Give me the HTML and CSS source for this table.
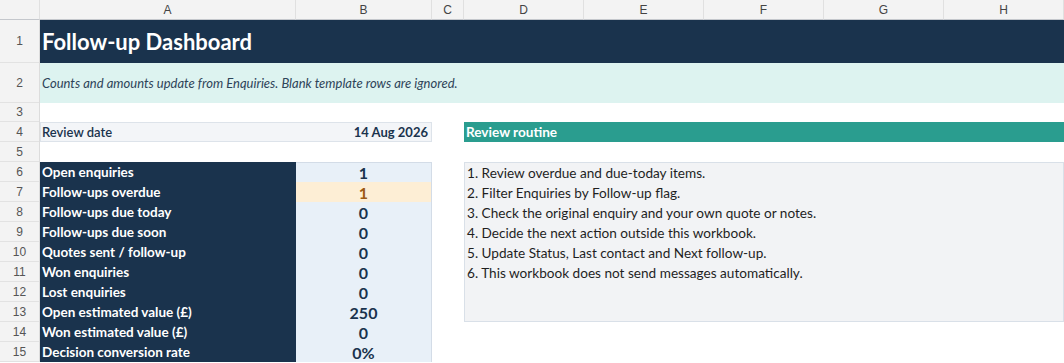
FILE: index.html
```html
<!DOCTYPE html>
<html>
<head>
<meta charset="utf-8">
<link rel="stylesheet" href="styles.css">
</head>
<body>
<div class="sheet">
  <div class="corner"></div>
  <div class="colhead">A</div>
  <div class="colhead">B</div>
  <div class="colhead">C</div>
  <div class="colhead">D</div>
  <div class="colhead">E</div>
  <div class="colhead">F</div>
  <div class="colhead">G</div>
  <div class="colhead">H</div>

  <div class="rownums">
    <div class="rn r-tall">1</div>
    <div class="rn r-mid">2</div>
    <div class="rn r-short">3</div>
    <div class="rn">4</div>
    <div class="rn">5</div>
    <div class="rn">6</div>
    <div class="rn">7</div>
    <div class="rn">8</div>
    <div class="rn">9</div>
    <div class="rn">10</div>
    <div class="rn">11</div>
    <div class="rn">12</div>
    <div class="rn">13</div>
    <div class="rn">14</div>
    <div class="rn">15</div>
  </div>

  <div class="title">Follow-up Dashboard</div>
  <div class="subtitle">Counts and amounts update from Enquiries. Blank template rows are ignored.</div>

  <div class="review-date"><span class="rd-label">Review date</span><span class="rd-value">14 Aug 2026</span></div>
  <div class="routine-head">Review routine</div>

  <div class="metrics">
    <div class="m-label">Open enquiries</div><div class="m-val">1</div>
    <div class="m-label">Follow-ups overdue</div><div class="m-val warn">1</div>
    <div class="m-label">Follow-ups due today</div><div class="m-val">0</div>
    <div class="m-label">Follow-ups due soon</div><div class="m-val">0</div>
    <div class="m-label">Quotes sent / follow-up</div><div class="m-val">0</div>
    <div class="m-label">Won enquiries</div><div class="m-val">0</div>
    <div class="m-label">Lost enquiries</div><div class="m-val">0</div>
    <div class="m-label">Open estimated value (£)</div><div class="m-val">250</div>
    <div class="m-label">Won estimated value (£)</div><div class="m-val">0</div>
    <div class="m-label">Decision conversion rate</div><div class="m-val">0%</div>
  </div>

  <div class="routine">
    <div class="step">1. Review overdue and due-today items.</div>
    <div class="step">2. Filter Enquiries by Follow-up flag.</div>
    <div class="step">3. Check the original enquiry and your own quote or notes.</div>
    <div class="step">4. Decide the next action outside this workbook.</div>
    <div class="step">5. Update Status, Last contact and Next follow-up.</div>
    <div class="step">6. This workbook does not send messages automatically.</div>
  </div>
</div>
</body>
</html>
```

FILE: styles.css
```css
html, body {
  margin: 0;
  padding: 0;
  background: #ffffff;
}

.sheet {
  display: grid;
  grid-template-columns: 40px 256px 136px 32px repeat(5, 120px);
  grid-template-rows: 20px 43px 40px 19px repeat(12, 20px);
  width: 1064px;
  font-family: Lato, "Liberation Sans", sans-serif;
}

.corner,
.colhead {
  background: #f3f3f3;
  border-right: 1px solid #e0e0e0;
  border-bottom: 1px solid #c4c7cc;
  box-sizing: border-box;
}

.colhead {
  display: flex;
  align-items: center;
  justify-content: center;
  font-family: "Liberation Sans", Arial, sans-serif;
  font-size: 12px;
  color: #444;
}

.colhead:last-of-type {
  border-right: none;
}

.rownums {
  grid-column: 1;
  grid-row: 2 / 17;
  display: grid;
  grid-template-rows: 43px 40px 19px repeat(12, 20px);
  background: #f3f3f3;
  border-right: 1px solid #dcdcdc;
}

.rn {
  display: flex;
  align-items: center;
  justify-content: center;
  font-family: "Liberation Sans", Arial, sans-serif;
  font-size: 12px;
  color: #555;
  border-bottom: 1px solid #e2e2e2;
}

.title {
  grid-column: 2 / 10;
  grid-row: 2;
  background: #1a334d;
  color: #ffffff;
  font-weight: 700;
  font-size: 22px;
  display: flex;
  align-items: center;
  padding-left: 2px;
}

.subtitle {
  grid-column: 2 / 10;
  grid-row: 3;
  background: #ddf3f0;
  color: #2e4459;
  font-style: italic;
  font-size: 13px;
  display: flex;
  align-items: center;
  padding-left: 2px;
}

.review-date {
  grid-column: 2 / 4;
  grid-row: 5;
  background: #f3f5f8;
  border: 1px solid #dde3ea;
  display: flex;
  align-items: center;
  justify-content: space-between;
  padding: 0 3px 0 1px;
  color: #1a334d;
  font-size: 13px;
}

.rd-label {
  font-weight: 600;
}

.rd-value {
  font-weight: 700;
}

.routine-head {
  grid-column: 5 / 10;
  grid-row: 5;
  background: #2a9d8f;
  color: #ffffff;
  font-weight: 700;
  font-size: 13.6px;
  display: flex;
  align-items: center;
  padding-left: 2px;
}

.metrics {
  grid-column: 2 / 4;
  grid-row: 7 / 17;
  display: grid;
  grid-template-columns: 256px 136px;
  grid-template-rows: repeat(10, 20px);
}

.m-label {
  background: #1a334d;
  color: #ffffff;
  font-weight: 700;
  font-size: 13.5px;
  display: flex;
  align-items: center;
  padding-left: 2px;
}

.m-val {
  background: #e8f0f8;
  color: #1a334d;
  font-weight: 700;
  font-size: 16px;
  display: flex;
  align-items: center;
  justify-content: center;
  border-right: 1px solid #d3dce7;
}

.m-val:nth-child(2) {
  border-top: 1px solid #d3dce7;
}

.m-val.warn {
  background: #fdeed5;
  color: #9c5a12;
}

.routine {
  grid-column: 5 / 10;
  grid-row: 7 / 15;
  background: #f2f3f5;
  border: 1px solid #d9e0e8;
  display: grid;
  grid-template-rows: repeat(6, 20px);
  align-content: start;
  padding-left: 2px;
}

.step {
  display: flex;
  align-items: center;
  font-size: 13.6px;
  color: #1f1f1f;
}
```
